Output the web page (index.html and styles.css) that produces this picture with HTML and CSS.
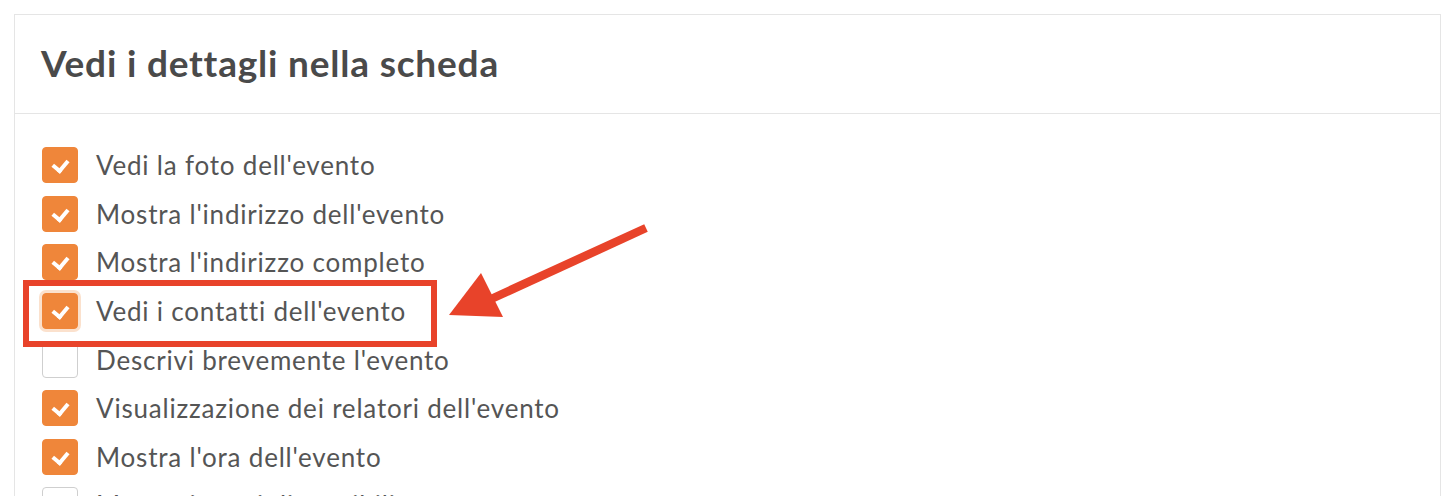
FILE: index.html
```html
<!DOCTYPE html>
<html lang="it">
<head>
    <meta charset="UTF-8">
    <title>Vedi i dettagli nella scheda</title>
    <link rel="stylesheet" href="styles.css">
</head>
<body>
    <div class="card">
        <div class="card-header">
            <h2>Vedi i dettagli nella scheda</h2>
        </div>
        <div class="card-body">
            <ul class="options">
                <li class="option"><span class="box checked"></span>Vedi la foto dell'evento</li>
                <li class="option"><span class="box checked"></span>Mostra l'indirizzo dell'evento</li>
                <li class="option"><span class="box checked"></span>Mostra l'indirizzo completo</li>
                <li class="option"><span class="box checked focus"></span>Vedi i contatti dell'evento</li>
                <li class="option"><span class="box"></span>Descrivi brevemente l'evento</li>
                <li class="option"><span class="box checked"></span>Visualizzazione dei relatori dell'evento</li>
                <li class="option"><span class="box checked"></span>Mostra l'ora dell'evento</li>
                <li class="option"><span class="box"></span>Mostra i posti disponibili</li>
            </ul>
            <div class="highlight"></div>
            <svg class="arrow" width="220" height="110" viewBox="0 0 220 110">
                <line x1="207" y1="10" x2="50" y2="82" stroke="#e8432a" stroke-width="8.5"/>
                <polygon points="10,97 42,55 64,99" fill="#e8432a"/>
            </svg>
        </div>
    </div>
</body>
</html>
```

FILE: styles.css
```css
body {
    margin: 0;
    padding: 14px 14px 0 14px;
    background: #fff;
    font-family: Lato, "Open Sans", sans-serif;
    color: #4d4d4d;
    overflow: hidden;
}

.card {
    border: 1px solid #e5e5e5;
    background: #fff;
    margin-right: 1px;
}

.card-header {
    height: 98px;
    border-bottom: 1px solid #e5e5e5;
    padding: 0 26px;
    display: flex;
    align-items: center;
}

.card-header h2 {
    margin: 0 0 3px 0;
    font-size: 37px;
    font-weight: 700;
    color: #4a4a4a;
    letter-spacing: 0.8px;
}

.card-body {
    position: relative;
    padding: 27px 27px 0 27px;
}

.options {
    list-style: none;
    margin: 0;
    padding: 0;
}

.option {
    height: 48.6px;
    display: flex;
    align-items: center;
    font-size: 26px;
    letter-spacing: 0.8px;
    color: #555;
}

.box {
    width: 36px;
    height: 36px;
    box-sizing: border-box;
    border: 1px solid #cfcfcf;
    border-radius: 4px;
    background: #fff;
    margin-right: 18px;
    flex-shrink: 0;
    position: relative;
}

.box.checked {
    background: #ef863a;
    border-color: #ef863a;
}

.box.checked::after {
    content: "";
    position: absolute;
    left: 12px;
    top: 9px;
    width: 7px;
    height: 11px;
    border: solid #fff;
    border-width: 0 4px 4px 0;
    transform: rotate(40deg);
}

.box.focus {
    box-shadow: 0 0 0 3px #fbe1cd;
}

.highlight {
    position: absolute;
    left: 8px;
    top: 166px;
    width: 414px;
    height: 67px;
    box-sizing: border-box;
    border: 6px solid #e8432a;
}

.arrow {
    position: absolute;
    left: 424px;
    top: 104px;
}
```
